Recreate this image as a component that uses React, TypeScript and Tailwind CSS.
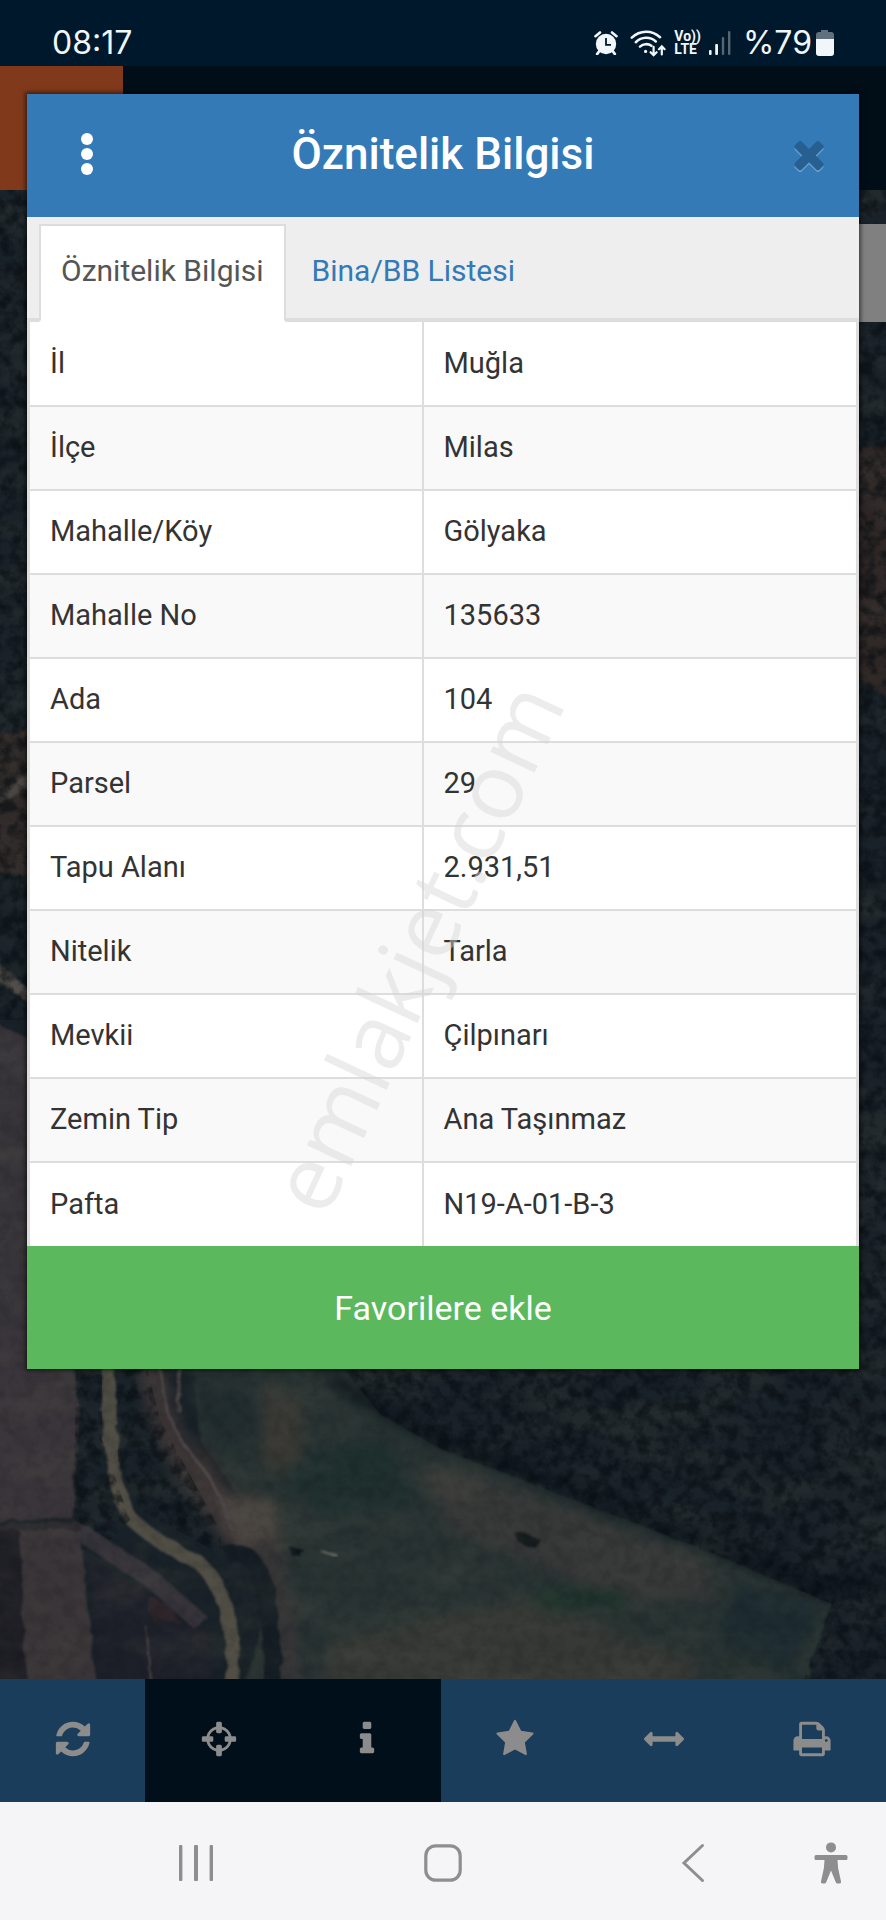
import { useState } from 'react';
import clsx from 'clsx';

const rows = [
  { label: 'İl', value: 'Muğla' },
  { label: 'İlçe', value: 'Milas' },
  { label: 'Mahalle/Köy', value: 'Gölyaka' },
  { label: 'Mahalle No', value: '135633' },
  { label: 'Ada', value: '104' },
  { label: 'Parsel', value: '29' },
  { label: 'Tapu Alanı', value: '2.931,51' },
  { label: 'Nitelik', value: 'Tarla' },
  { label: 'Mevkii', value: 'Çilpınarı' },
  { label: 'Zemin Tip', value: 'Ana Taşınmaz' },
  { label: 'Pafta', value: 'N19-A-01-B-3' },
];

const tabs = ['Öznitelik Bilgisi', 'Bina/BB Listesi'];

const tools = [
  {
    label: 'Yenile',
    viewBox: '0 0 1792 1792',
    path: 'M1639 1056q0 5-1 7-64 268-268 434.5t-478 166.5q-146 0-282.5-55t-243.5-157l-129 129q-19 19-45 19t-45-19-19-45v-448q0-26 19-45t45-19h448q26 0 45 19t19 45-19 45l-137 137q71 66 161 102t187 36q134 0 250-65t186-179q11-17 53-117 8-23 30-23h192q13 0 22.5 9.5t9.5 22.5zm25-800v448q0 26-19 45t-45 19h-448q-26 0-45-19t-19-45 19-45l138-138q-148-137-349-137-134 0-250 65t-186 179q-11 17-53 117-8 23-30 23h-199q-13 0-22.5-9.5t-9.5-22.5v-7q65-268 270-434.5t480-166.5q146 0 284 55.5t245 156.5l130-129q19-19 45-19t45 19 19 45z',
  },
  {
    label: 'Konum',
    active: true,
    viewBox: '0 0 1792 1792',
    path: 'M1325 1024h-109q-26 0-45-19t-19-45v-128q0-26 19-45t45-19h109q-32-108-112.5-188.5t-188.5-112.5v109q0 26-19 45t-45 19h-128q-26 0-45-19t-19-45v-109q-108 32-188.5 112.5t-112.5 188.5h109q26 0 45 19t19 45v128q0 26-19 45t-45 19h-109q32 108 112.5 188.5t188.5 112.5v-109q0-26 19-45t45-19h128q26 0 45 19t19 45v109q108-32 188.5-112.5t112.5-188.5zm339-192v128q0 26-19 45t-45 19h-143q-37 161-154.5 278.5t-278.5 154.5v143q0 26-19 45t-45 19h-128q-26 0-45-19t-19-45v-143q-161-37-278.5-154.5t-154.5-278.5h-143q-26 0-45-19t-19-45v-128q0-26 19-45t45-19h143q37-161 154.5-278.5t278.5-154.5v-143q0-26 19-45t45-19h128q26 0 45 19t19 45v143q161 37 278.5 154.5t154.5 278.5h143q26 0 45 19t19 45z',
  },
  {
    label: 'Bilgi',
    active: true,
    viewBox: '0 0 1792 1792',
    path: 'M1216 1344v128q0 26-19 45t-45 19h-512q-26 0-45-19t-19-45v-128q0-26 19-45t45-19h64v-384h-64q-26 0-45-19t-19-45v-128q0-26 19-45t45-19h384q26 0 45 19t19 45v576h64q26 0 45 19t19 45zm-128-1152v192q0 26-19 45t-45 19h-256q-26 0-45-19t-19-45v-192q0-26 19-45t45-19h256q26 0 45 19t19 45z',
  },
  {
    label: 'Favoriler',
    viewBox: '0 0 1792 1792',
    path: 'M1728 647q0 22-26 48l-363 354 86 500q1 7 1 20 0 21-10.5 35.5t-30.5 14.5q-19 0-40-12l-449-236-449 236q-22 12-40 12-21 0-31.5-14.5t-10.5-35.5q0-6 2-20l86-500-364-354q-25-27-25-48 0-37 56-46l502-73 225-455q19-41 49-41t49 41l225 455 502 73q56 9 56 46z',
  },
  {
    label: 'Ölçüm',
    viewBox: '0 0 1792 1792',
    path: 'M1792 896q0 26-19 45l-256 256q-19 19-45 19t-45-19-19-45v-128h-1024v128q0 26-19 45t-45 19-45-19l-256-256q-19-19-19-45t19-45l256-256q19-19 45-19t45 19 19 45v128h1024v-128q0-26 19-45t45-19 45 19l256 256q19 19 19 45z',
  },
  {
    label: 'Yazdır',
    viewBox: '-64 0 1792 1792',
    path: 'M384 1536h896v-256h-896v256zM384 896h896v-384h-160q-40 0-68-28t-28-68v-160h-640v640zM1536 960q0-26-19-45t-45-19-45 19-19 45 19 45 45 19 45-19 19-45zM1664 960v416q0 13-9.5 22.5t-22.5 9.5h-224v160q0 40-28 68t-68 28h-960q-40 0-68-28t-28-68v-160h-224q-13 0-22.5-9.5t-9.5-22.5v-416q0-79 56.5-135.5t135.5-56.5h64v-544q0-40 28-68t68-28h672q40 0 88 20t76 48l152 152q28 28 48 76t20 88v256h64q79 0 135.5 56.5t56.5 135.5z',
  },
];

function StatusBar() {
  return (
    <header className="flex h-[66px] items-center justify-between bg-[#00182b] px-[52px] pt-5 font-[Inter,sans-serif] text-[32px] leading-[44px] text-[#f1f6fb]">
      <span>08:17</span>
      <div className="flex items-center">
        {/* Alarm */}
        <svg className="mr-3 h-6 w-6" viewBox="0 0 24 24" fill="none" stroke="currentColor">
          <circle cx="12" cy="13" r="10.2" fill="currentColor" stroke="none" />
          <path d="M1.5 5.2 6 1.5M22.5 5.2 18 1.5" strokeWidth="2.6" strokeLinecap="round" />
          <path d="M5 20.5 3.2 23M19 20.5l1.8 2.5" strokeWidth="2.8" strokeLinecap="round" />
          <path d="M12 7v6.8h5" stroke="#00182b" strokeWidth="1.8" />
        </svg>
        {/* Wi-Fi */}
        <svg className="mr-2 h-[27px] w-9" viewBox="0 0 36 27" fill="none" stroke="currentColor" strokeWidth="2.6" strokeLinecap="round">
          <path d="M1.8 7.6C10-.2 22-.2 30 7.2" />
          <path d="M5.8 12.2c5.8-5.6 14.2-5.8 20-.8" />
          <path d="M10 16.6c3.2-3 8-3.2 11.4-.8" />
          <circle cx="15.6" cy="21.4" r="1.6" fill="currentColor" stroke="none" />
          <path d="M23.6 16.8v8.4m-3-3 3 3 3-3M31.8 24.4v-8m-2.8 2.8 2.8-2.9 2.8 2.9" strokeWidth="2.2" />
        </svg>
        {/* VoLTE */}
        <span className="mr-2 flex flex-col font-[Roboto,sans-serif] text-[14px] font-bold leading-[13px]">
          <span>Vo))</span>
          <span>LTE</span>
        </span>
        {/* Signal */}
        <svg className="mr-3 h-6 w-[22px]" viewBox="0 0 22 24" fill="currentColor">
          <rect x="0" y="19" width="2.6" height="5" rx="1" />
          <rect x="6.2" y="13" width="2.8" height="11" rx="1" />
          <rect x="12.8" y="6" width="2.4" height="18" rx="1" opacity=".35" />
          <rect x="19" y="0" width="2.4" height="24" rx="1" opacity=".35" />
        </svg>
        <span className="mr-1">%79</span>
        {/* Battery */}
        <svg className="h-[26px] w-[18px]" viewBox="0 0 18 26" fill="currentColor">
          <path d="M5 0h7v2h3a3 3 0 0 1 3 3v4H0V5a3 3 0 0 1 3-3h2z" opacity=".4" />
          <path d="M0 9h18v14a3 3 0 0 1-3 3H3a3 3 0 0 1-3-3z" />
        </svg>
      </div>
    </header>
  );
}

function SatelliteMap() {
  return (
    <svg
      className="absolute inset-0 h-full w-full"
      viewBox="0 190 886 1489"
      preserveAspectRatio="xMidYMid slice"
      aria-hidden="true"
    >
      <defs>
        <filter id="soft" x="-10%" y="-10%" width="120%" height="120%" colorInterpolationFilters="sRGB">
          <feGaussianBlur stdDeviation="7" />
        </filter>
        <filter id="edge" colorInterpolationFilters="sRGB">
          <feTurbulence type="fractalNoise" baseFrequency="0.06" numOctaves="3" seed="4" />
          <feDisplacementMap in="SourceGraphic" scale="9" />
          <feGaussianBlur stdDeviation="1.2" />
        </filter>
        <filter id="grainDark" x="0" y="0" width="100%" height="100%" colorInterpolationFilters="sRGB">
          <feTurbulence type="fractalNoise" baseFrequency="0.08" numOctaves="4" seed="7" />
          <feColorMatrix values="0 0 0 0 0.02  0 0 0 0 0.04  0 0 0 0 0.06  3 0 0 0 -1.2" />
        </filter>
        <filter id="grainLight" x="0" y="0" width="100%" height="100%" colorInterpolationFilters="sRGB">
          <feTurbulence type="fractalNoise" baseFrequency="0.012 0.03" numOctaves="4" seed="12" />
          <feColorMatrix values="0 0 0 0 0.34  0 0 0 0 0.34  0 0 0 0 0.3  0 2 0 0 -0.8" />
        </filter>
        <clipPath id="woods">
          <path d="M320 190H886V1679H804L832 1604 700 1548 560 1494 443 1450 380 1414 320 1340z" />
          <path d="M0 190H40V1020H0z" />
          <path d="M76 1340H102V1440L130 1520 110 1540 74 1520z" />
          <path d="M116 1340H140L160 1420 220 1530 222 1555 140 1510 118 1460z" />
        </clipPath>
      </defs>

      <rect y="190" width="886" height="1489" fill="#192228" />

      {/* Strips visible on both sides of the dialog */}
      <g filter="url(#edge)">
        <path d="M-10 735 30 730V880L-10 868z" fill="#302b2a" />
        <path d="M0 790 30 772V784L0 806z" fill="#4a4643" />
        <path d="M-10 955 30 990V1004L-10 975z" fill="#514d4a" />
        <path d="M-10 1020 30 1040V1380H-10z" fill="#38353a" />
        <path d="M856 450 896 440V700L856 680z" fill="#2d2625" />
      </g>

      {/* Open field */}
      <path
        d="M190 1340H320L380 1414 443 1450 560 1494 700 1548 832 1604 800 1700H240L282 1560 200 1440z"
        fill="#283332"
        filter="url(#edge)"
      />
      <g filter="url(#soft)">
        <path d="M420 1462 560 1505 700 1560 720 1600 620 1600 450 1530z" fill="#373838" />
        <path d="M330 1640 520 1600 700 1660 690 1690H320z" fill="#363936" />
        <path d="M270 1460 380 1440 420 1500 330 1520z" fill="#1f302f" />
        <path d="M530 1590 620 1590 630 1606 540 1610z" fill="#1c322b" />
        <path d="M740 1580 820 1605 790 1670 720 1640z" fill="#1d2b30" />
        <path d="M190 1360H250L262 1440 225 1450 200 1420z" fill="#222d30" />
        <path d="M265 1380 305 1410 300 1465 262 1470z" fill="#383733" />
        <path d="M200 1440 225 1480 230 1520 180 1470z" fill="#302d2e" />
      </g>
      <path d="M514 1532 540 1538 536 1548 520 1544z" fill="#161c1d" filter="url(#edge)" />
      <path d="M288 1546 304 1550 300 1556 290 1554z" fill="#0c151b" filter="url(#edge)" />
      <path d="M320 1550 338 1556" stroke="#6b716d" strokeWidth="2" filter="url(#edge)" />

      {/* Tree belt above the field */}
      <path
        d="M330 1376 390 1412 450 1442 565 1486 700 1538 820 1588 886 1590"
        stroke="#0e171e"
        strokeWidth="16"
        fill="none"
        filter="url(#soft)"
      />
      <path d="M840 1600 822 1640 806 1690H896V1600z" fill="#161f26" filter="url(#edge)" />

      {/* Tilled plots on the left */}
      <g filter="url(#edge)">
        <path d="M-10 1330H70L80 1430 72 1518-10 1521z" fill="#3a353a" />
        <path d="M-10 1523H78L86 1530H-10z" fill="#2a282c" />
        <path d="M-10 1530H19L27 1700H-10z" fill="#1e1e25" />
        <path d="M19 1530H80L98 1700H27z" fill="#3a3538" />
        <path d="M88 1558 146 1590 210 1632 216 1700H98z" fill="#1d2029" />
        <path d="M80 1532 150 1578 200 1622" stroke="#36333a" strokeWidth="18" fill="none" />
        <path d="M148 1596 170 1606 180 1622 152 1620z" fill="#2e252a" />
        <path d="M145 1625 152 1690" stroke="#4a4549" strokeWidth="2" />
      </g>

      {/* Dirt tracks */}
      <g filter="url(#soft)" fill="none">
        <path d="M150 1360Q160 1430 190 1470T240 1545" stroke="#3d3536" strokeWidth="24" />
        <path d="M215 1490 275 1500 285 1560 235 1556z" fill="#4b4541" />
        <path d="M262 1540Q285 1600 290 1690" stroke="#363536" strokeWidth="26" />
      </g>
      <g filter="url(#edge)" fill="none">
        <path d="M160 1360Q162 1420 192 1455T232 1530" stroke="#50484a" strokeWidth="3" />
        <path d="M180 1360 178 1412" stroke="#4b4344" strokeWidth="3" />
        <path d="M226 1556Q250 1545 262 1580T272 1690" stroke="#151e24" strokeWidth="18" />
        <path
          d="M108 1340 110 1430Q112 1490 132 1520 160 1545 198 1562 226 1585 232 1640L234 1700"
          stroke="#514e45"
          strokeWidth="14"
        />
      </g>

      <rect y="190" width="886" height="1489" filter="url(#grainLight)" opacity=".25" />
      <rect y="190" width="886" height="1489" filter="url(#grainDark)" opacity=".12" />
      <g clipPath="url(#woods)">
        <rect y="190" width="886" height="1489" filter="url(#grainDark)" opacity=".5" />
      </g>
    </svg>
  );
}

function InfoTable() {
  return (
    <table className="w-full border-x-[3px] border-[#ddd] bg-white text-[29px] leading-10 text-[#333]">
      <tbody>
        {rows.map((row) => (
          <tr key={row.label} className="h-[84px] border-b-2 border-[#ddd] last:border-b-0 even:bg-[#f9f9f9]">
            <th scope="row" className="w-[394px] border-r-2 border-[#ddd] px-5 pb-[2px] text-left font-normal">
              {row.label}
            </th>
            <td className="px-5 pb-[2px]">{row.value}</td>
          </tr>
        ))}
      </tbody>
    </table>
  );
}

function InfoDialog() {
  const [activeTab, setActiveTab] = useState(tabs[0]);

  return (
    <section
      role="dialog"
      aria-labelledby="dialog-title"
      className="absolute inset-x-[27px] top-[94px] shadow-[0_0_4px_2px_rgba(0,0,0,0.5)]"
    >
      {/* Title bar */}
      <div className="grid h-[123px] grid-cols-[120px_1fr_120px] items-center bg-[#337ab7] pb-[3px]">
        <button type="button" aria-label="Menü" className="flex h-16 items-center justify-center text-white">
          <svg className="h-11 w-3" viewBox="0 0 12 44" fill="currentColor">
            <circle cx="6" cy="7" r="6" />
            <circle cx="6" cy="22" r="6" />
            <circle cx="6" cy="37" r="6" />
          </svg>
        </button>
        <h1 id="dialog-title" className="text-center text-[44px] font-medium leading-[52px] text-white">
          Öznitelik Bilgisi
        </h1>
        <button type="button" aria-label="Kapat" className="flex h-16 items-center justify-end pr-7 text-[#275f90]">
          <svg
            className="h-11 w-11 drop-shadow-[0_2px_0_rgba(255,255,255,0.25)]"
            viewBox="0 0 1792 1792"
            fill="currentColor"
          >
            <path d="M1490 1322q0 40-28 68l-136 136q-28 28-68 28t-68-28l-294-294-294 294q-28 28-68 28t-68-28l-136-136q-28-28-28-68t28-68l294-294-294-294q-28-28-28-68t28-68l136-136q28-28 68-28t68 28l294 294 294-294q28-28 68-28t68 28l136 136q28 28 28 68t-28 68l-294 294 294 294q28 28 28 68z" />
          </svg>
        </button>
      </div>

      {/* Tabs */}
      <div role="tablist" className="flex h-[105px] border-b-4 border-[#ddd] bg-[#eee] pt-[7px] pl-3">
        {tabs.map((tab) => (
          <button
            key={tab}
            type="button"
            role="tab"
            aria-selected={tab === activeTab}
            onClick={() => setActiveTab(tab)}
            className={clsx(
              'border-2 px-5 text-[30px] leading-10',
              tab === activeTab
                ? '-mb-1 border-[#ddd] border-b-white bg-white pb-1 text-[#555]'
                : 'ml-1 border-transparent text-[#337ab7]',
            )}
          >
            {tab}
          </button>
        ))}
      </div>

      <InfoTable />

      <button type="button" className="h-[123px] w-full bg-[#5cb85c] text-[34px] leading-10 text-white">
        Favorilere ekle
      </button>

      {/* Watermark */}
      <span className="pointer-events-none absolute bottom-[145px] left-[309px] origin-bottom-left -rotate-65 whitespace-nowrap font-['Open_Sans'] text-[91px] leading-none text-[#d4d4d4]/45">
        emlakjet.com
      </span>
    </section>
  );
}

function Toolbar() {
  return (
    <div className="grid h-[123px] grid-cols-[145px_repeat(5,minmax(0,1fr))] bg-[#1a3d5b]">
      {tools.map((tool) => (
        <button
          key={tool.label}
          type="button"
          aria-label={tool.label}
          className={clsx('flex items-center justify-center pb-[3px] text-[#8c8c8c]', tool.active && 'bg-[#000f1a]')}
        >
          <svg className="h-10 w-10" viewBox={tool.viewBox} fill="currentColor">
            <path d={tool.path} />
          </svg>
        </button>
      ))}
    </div>
  );
}

function NavigationBar() {
  return (
    <nav className="grid h-[118px] grid-cols-[160fr_334fr_166fr_110fr] bg-[#f5f5f8] pt-1 pl-[116px] text-[#8e8e90]">
      <button type="button" aria-label="Son uygulamalar" className="flex items-center justify-center">
        <svg className="h-9 w-9" viewBox="0 0 36 36" fill="currentColor">
          <rect x="1" width="3.4" height="36" rx="1" />
          <rect x="16" width="4" height="36" rx="1" />
          <rect x="31.6" width="3.4" height="36" rx="1" />
        </svg>
      </button>
      <button type="button" aria-label="Ana ekran" className="flex items-center justify-center">
        <svg className="h-[38px] w-[38px]" viewBox="0 0 38 38" fill="none" stroke="currentColor" strokeWidth="3.2">
          <rect x="1.8" y="1.8" width="34.4" height="34.4" rx="10" />
        </svg>
      </button>
      <button type="button" aria-label="Geri" className="flex items-center justify-center">
        <svg className="h-10 w-6" viewBox="0 0 24 40" fill="none" stroke="currentColor" strokeWidth="3">
          <path d="M21.5 2.5 3 20l18.5 17.5" strokeLinecap="round" />
        </svg>
      </button>
      <button type="button" aria-label="Erişilebilirlik" className="flex items-center justify-center">
        <svg className="h-[42px] w-[34px]" viewBox="0 0 34 42" fill="currentColor">
          <circle cx="17" cy="5.4" r="5" />
          <path d="M2 13h30a1.500 1.500 0 0 1 1.500 1.500v2A1.500 1.500 0 0 1 32 18h-8.500l.6 8L27 39.500a1.500 1.500 0 0 1-1.500 1.900h-2a1.800 1.800 0 0 1-1.700-1.200L17 28.500l-4.800 11.700a1.800 1.800 0 0 1-1.700 1.200h-2A1.500 1.500 0 0 1 7 39.500L9.900 26l.6-8H2A1.500 1.500 0 0 1 .5 16.500v-2A1.500 1.500 0 0 1 2 13z" />
        </svg>
      </button>
    </nav>
  );
}

export default function App() {
  return (
    <div className="relative flex min-h-screen flex-col font-[Roboto,sans-serif]">
      <StatusBar />

      {/* Dimmed app header */}
      <div className="h-[124px] bg-[#010e18]">
        <div className="h-full w-[123px] bg-[#803a1b]" />
      </div>

      <main className="relative min-h-[1200px] flex-1 overflow-hidden bg-[#17212a]">
        <SatelliteMap />
        <div className="absolute top-[34px] right-0 h-[98px] w-[60px] bg-[#808080]" />
      </main>

      <Toolbar />
      <NavigationBar />
      <InfoDialog />
    </div>
  );
}
